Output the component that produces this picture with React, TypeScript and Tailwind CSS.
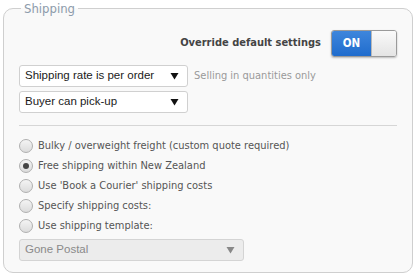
import React from 'react';

const tahoma = "font-['DejaVu_Sans_Condensed','DejaVu_Sans',sans-serif]";
const arial = "font-['Liberation_Sans',Arial,sans-serif]";

const Caret = ({ muted }: { muted?: boolean }) => (
  <svg width="9" height="8" viewBox="0 0 9 8" className={muted ? 'text-[#888]' : 'text-[#111]'}>
    <path d="M0.5 1h8L4.5 7.5z" fill="currentColor" />
  </svg>
);

const Select = ({ label, width, disabled }: { label: string; width: string; disabled?: boolean }) => (
  <div
    className={`${width} h-[22px] shrink-0 flex items-center justify-between pl-[5px] pr-[8px] rounded-[3px] border ${
      disabled ? 'bg-[#ececec] border-[#d4d4d4] text-[#8a8a8a]' : 'bg-white border-[#d0d0d0] text-[#1a1a1a]'
    } ${arial} text-[11.5px] whitespace-nowrap`}
  >
    <span>{label}</span>
    <Caret muted={disabled} />
  </div>
);

const Radio = ({ label, checked }: { label: string; checked?: boolean }) => (
  <div className="flex items-center h-[20px] gap-[5px]">
    <div className="w-[14px] h-[14px] rounded-full border border-[#b0b0b0] bg-gradient-to-b from-[#f4f4f4] to-[#dcdcdc] flex items-center justify-center">
      {checked && <div className="w-[6px] h-[6px] rounded-full bg-[#444]" />}
    </div>
    <span className={`${tahoma} text-[11px] text-[#555]`}>{label}</span>
  </div>
);

export default function App() {
  return (
    <div className="w-[415px] h-[277px] bg-white pt-[1px] pl-[3px]">
      <fieldset className="w-[410px] h-[272px] rounded-[10px] border border-[#cfcfcf] bg-[#f9f9f9] px-[15px] pb-0">
        <legend className={`ml-[2px] px-[3px] ${tahoma} text-[13px] leading-[15px] text-[#8d9bab]`}>Shipping</legend>

        <div className="flex items-center justify-end gap-[10px] mt-[14px]">
          <span className={`${tahoma} font-bold text-[11px] text-[#444]`}>Override default settings</span>
          <div className="flex w-[66px] h-[27px] rounded-[3px] border border-[#9a9a9a] overflow-hidden shadow-[0_1px_2px_rgba(0,0,0,0.25)]">
            <div className={`w-[39px] bg-gradient-to-b from-[#3e86dc] to-[#1f6ccd] text-white font-bold text-[11.5px] flex items-center justify-center ${tahoma}`}>
              ON
            </div>
            <div className="flex-1 bg-gradient-to-b from-[#fafafa] to-[#e4e4e4] border-l border-[#b8b8b8]" />
          </div>
        </div>

        <div className="flex items-center gap-[6px] mt-[8px]">
          <Select label="Shipping rate is per order" width="w-[169px]" />
          <span className={`${tahoma} text-[11px] text-[#999] whitespace-nowrap`}>Selling in quantities only</span>
        </div>
        <div className="mt-[4px]">
          <Select label="Buyer can pick-up" width="w-[169px]" />
        </div>

        <div className="h-px bg-[#d6d6d6] mt-[12px] mb-[10px]" />

        <div className="flex flex-col">
          <Radio label="Bulky / overweight freight (custom quote required)" />
          <Radio label="Free shipping within New Zealand" checked />
          <Radio label="Use 'Book a Courier' shipping costs" />
          <Radio label="Specify shipping costs:" />
          <Radio label="Use shipping template:" />
        </div>
        <div className="mt-[3px]">
          <Select label="Gone Postal" width="w-[225px]" disabled />
        </div>
      </fieldset>
    </div>
  );
}
